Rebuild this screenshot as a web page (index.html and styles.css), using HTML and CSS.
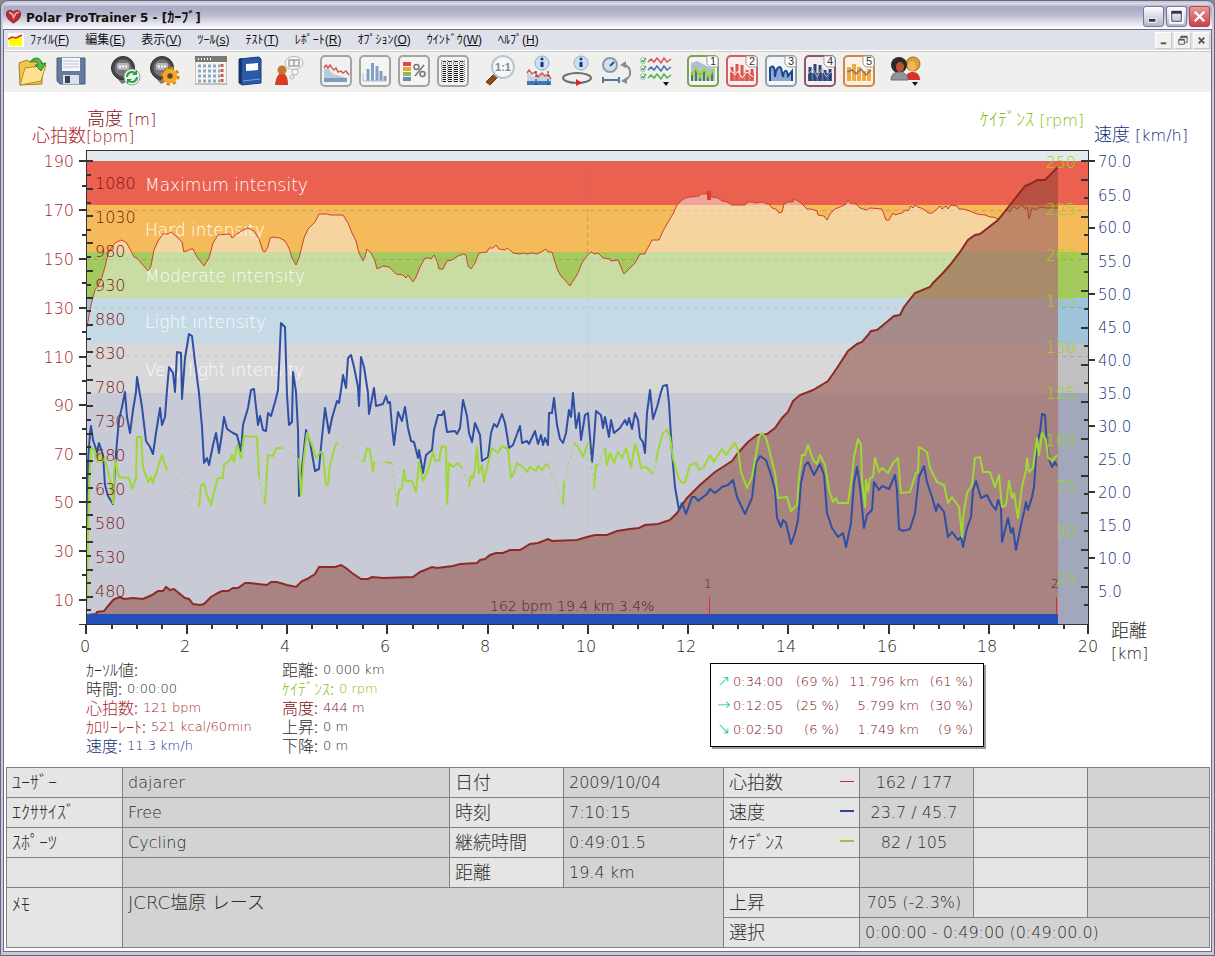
FILE: index.html
```html
<!DOCTYPE html>
<html lang="ja">
<head>
    <meta charset="UTF-8">
    <meta name="viewport" content="width=device-width, initial-scale=1.0">
    <title>Polar ProTrainer 5 - [ｶｰﾌﾞ]</title>
    <link rel="stylesheet" href="styles.css">
</head>
<body>
<div class="window">
    <header class="title-bar">
        <svg class="app-icon" viewBox="0 0 14 14"><path d="M7 13C2 10 0 7 .5 4 1 1 5 .5 7 3 9 .5 13 1 13.500 4 14 7 12 10 7 13Z" fill="#c8252c" stroke="#6d3a40"/><path d="M3 3l3 2 1 3 2-4 3-1" fill="none" stroke="#f6a9a6" stroke-width="1.500"/></svg>
        <h1>Polar ProTrainer 5 - [<span class="kana">ｶｰﾌﾞ</span>]</h1>
        <div class="window-buttons">
            <button class="wb" aria-label="最小化"><svg viewBox="0 0 20 20"><path d="M4 14h9" stroke="#fff" stroke-width="5"/><path d="M5 14h7" stroke="#33334f" stroke-width="3"/></svg></button>
            <button class="wb" aria-label="最大化"><svg viewBox="0 0 20 20"><path d="M4 5h12v11H4z" fill="none" stroke="#fff" stroke-width="3"/><path d="M5 6h10v9H5z" fill="none" stroke="#33334f"/><path d="M4.500 5.500h11" stroke="#33334f" stroke-width="3"/></svg></button>
            <button class="wb wb-close" aria-label="閉じる"><svg viewBox="0 0 20 20"><path d="M5 5l10 10M15 5L5 15" stroke="#fff" stroke-width="2.500"/></svg></button>
        </div>
    </header>
    <div class="client">
        <nav class="menu-bar">
            <svg class="doc-icon" viewBox="0 0 16 14"><path d="M0 0h16v14H0z" fill="#fff"/><path d="M1 6l4-2 3 1 6-2v10H1z" fill="#ff0"/><path d="M0 6l4-2 4 1 6-3" fill="none" stroke="#d22" stroke-width="1.500"/></svg>
            <button>ﾌｧｲﾙ(<u>F</u>)</button>
            <button>編集(<u>E</u>)</button>
            <button>表示(<u>V</u>)</button>
            <button>ﾂｰﾙ(<u>s</u>)</button>
            <button>ﾃｽﾄ(<u>T</u>)</button>
            <button>ﾚﾎﾟｰﾄ(<u>R</u>)</button>
            <button>ｵﾌﾟｼｮﾝ(<u>O</u>)</button>
            <button>ｳｲﾝﾄﾞｳ(<u>W</u>)</button>
            <button>ﾍﾙﾌﾟ(<u>H</u>)</button>
            <div class="mdi-buttons">
                <button aria-label="最小化"><svg viewBox="0 0 16 16"><path d="M5 11h6" stroke="#555" stroke-width="2"/></svg></button>
                <button aria-label="元に戻す"><svg viewBox="0 0 16 16"><path d="M6 6V4h7v6h-2M4 7h6v5H4z" fill="none" stroke="#555"/><path d="M6 4h7M4 7h6" stroke="#555" stroke-width="2"/></svg></button>
                <button aria-label="閉じる"><svg viewBox="0 0 16 16"><path d="M5 5l6 6M11 5l-6 6" stroke="#555" stroke-width="2"/></svg></button>
            </div>
        </nav>

        <div class="toolbar">
            <div class="tool-group first">
                <button aria-label="開く"><svg viewBox="0 0 32 32"><path d="M3 8l8-3 3 2 12 0v22L4 30z" fill="#f0c552" stroke="#a87c1c"/><path d="M9 13l21-3-5 16L4 30z" fill="#fde391" stroke="#b98a28"/><path d="M14 7c4-6 11-5 12 2l4-1-5 8-6-6 3 0c-1-4-4-5-8-3z" fill="#55b944" stroke="#2a7d26"/></svg></button>
                <button aria-label="保存"><svg viewBox="0 0 32 32"><path d="M2 3h28v26H5l-3-3z" fill="#66799f" stroke="#4c5a7c"/><path d="M7 3h18v13H7z" fill="#f4f6fa"/><path d="M8 6h16M8 9h16M8 12h16" stroke="#b9c4d6"/><path d="M8 20h16v9H8z" fill="#dde0e6"/><path d="M10 21h5v7h-5z" fill="#34405c"/></svg></button>
            </div>
            <div class="tool-group">
                <button aria-label="転送"><svg viewBox="0 0 32 32"><path d="M5 20l8 9 8-4-6-8z" fill="#777"/><circle cx="14" cy="13" r="11.500" fill="#4a4649" stroke="#2c2a2c"/><circle cx="14" cy="13" r="8.500" fill="#77737a"/><rect x="8" y="8" width="12" height="7" rx="2" fill="#b4b4bc"/><path d="M10 11.500h8" stroke="#fff" stroke-width="2" stroke-dasharray="2 1"/><circle cx="23" cy="22" r="8" fill="#e8f3e8" stroke="#91a894"/><path d="M18 22a5 5 0 0 1 9-3M28 22a5 5 0 0 1-9 3" fill="none" stroke="#26a24a" stroke-width="2"/><path d="M28 15v5h-5zM18 29v-5h5z" fill="#26a24a"/></svg></button>
                <button aria-label="設定"><svg viewBox="0 0 32 32"><path d="M5 20l8 9 8-4-6-8z" fill="#777"/><circle cx="14" cy="13" r="11.500" fill="#4a4649" stroke="#2c2a2c"/><circle cx="14" cy="13" r="8.500" fill="#77737a"/><rect x="8" y="8" width="12" height="7" rx="2" fill="#b4b4bc"/><path d="M10 11.500h8" stroke="#fff" stroke-width="2" stroke-dasharray="2 1"/><circle cx="22" cy="21" r="8" fill="none" stroke="#d98410" stroke-width="3" stroke-dasharray="3.300 3"/><circle cx="22" cy="21" r="5" fill="#5c4a30" stroke="#f7a823" stroke-width="4.500"/></svg></button>
            </div>
            <div class="tool-group">
                <button aria-label="カレンダー"><svg viewBox="0 0 32 32"><path d="M0 2h32v27H0z" fill="#f5f5f3" stroke="#94908e"/><path d="M0 1h32v6H0z" fill="#7d7775"/><path d="M3 4h13" stroke="#fff" stroke-width="2" stroke-dasharray="1 2"/><path d="M3 11h22M3 16h22M3 21h22M3 26h22" stroke="#8fa8c4" stroke-width="3" stroke-dasharray="3 2"/><path d="M27 9v20" stroke="#d9544d" stroke-width="3" stroke-dasharray="3 2"/></svg></button>
                <button aria-label="日誌"><svg viewBox="0 0 32 32"><path d="M5 4l20-2 2 2v24l-19 2-3-2z" fill="#2b59a8" stroke="#183d7e"/><path d="M5 4l3-1v26l-3-1z" fill="#153671"/><path d="M12 9l12-1v7l-12 1z" fill="#fff"/><path d="M9 26l17-2" stroke="#7ea2d9"/></svg></button>
                <button aria-label="プロフィール"><svg viewBox="0 0 32 32"><path d="M2 30c1-9 4-12 7-12s6 3 6 12z" fill="#d73b22"/><circle cx="9" cy="15" r="4.500" fill="#c97432"/><ellipse cx="21" cy="8" rx="9" ry="6.500" fill="#f7f7f7" stroke="#b5b5b2"/><path d="M16 5h5v6h-5zM21 5h5v6h-5z" fill="none" stroke="#a3a3a0" stroke-width="1.500"/><circle cx="22" cy="17" r="3" fill="#f7f7f7" stroke="#b5b5b2"/><circle cx="19" cy="22" r="2" fill="#f7f7f7" stroke="#b5b5b2"/></svg></button>
            </div>
            <div class="tool-group">
                <button aria-label="カーブ"><svg viewBox="0 0 32 32"><rect x="1" y="1" width="30" height="30" rx="4" fill="#f1f1f1" stroke="#a6a4a2" stroke-width="2"/><path d="M4 14l4-1 5 6 7 2 7 2v4H4z" fill="#bccbdb"/><path d="M4 23h23v4H4z" fill="#7d9bbd"/><path d="M4 13l2-3 2 3 2-3 2 3 2 2 2-2 2 4 3-1 2 2 3-2 3 4" fill="none" stroke="#dc5557" stroke-width="1.500"/></svg></button>
                <button aria-label="分布"><svg viewBox="0 0 32 32"><rect x="1" y="1" width="30" height="30" rx="4" fill="#f4f4f3" stroke="#a6a4a2" stroke-width="2"/><path d="M9 26V14M13.500 26V8M18 26V11M22 26v-10M26 26v-5" stroke="#83a2c3" stroke-width="3"/><path d="M4 18v8h23" fill="none" stroke="#aac0d6"/></svg></button>
                <button aria-label="ゾーン"><svg viewBox="0 0 32 32"><rect x="1" y="1" width="30" height="30" rx="4" fill="#f4f4f3" stroke="#a6a4a2" stroke-width="2"/><path d="M5 9h8" stroke="#d94a3f" stroke-width="4"/><path d="M5 14h8" stroke="#efa13d" stroke-width="4"/><path d="M5 19h8" stroke="#8dbb50" stroke-width="4"/><path d="M5 24h8" stroke="#5f91bb" stroke-width="4"/><path d="M17 21l9-11" stroke="#777" stroke-width="1.500"/><circle cx="18.500" cy="12" r="2.500" fill="none" stroke="#777" stroke-width="1.500"/><circle cx="24.500" cy="19" r="2.500" fill="none" stroke="#777" stroke-width="1.500"/></svg></button>
                <button aria-label="一覧"><svg viewBox="0 0 32 32"><rect x="1" y="1" width="30" height="30" rx="4" fill="#f4f4f3" stroke="#a6a4a2" stroke-width="2"/><path d="M4 5h24v3H4z" fill="#ddd"/><path d="M5 6.500h24" stroke="#333" stroke-dasharray="4 2"/><path d="M7 10v17M13 10v17M19 10v17M25 10v17" stroke="#111" stroke-width="4" stroke-dasharray="1 1"/><path d="M4.500 5v22M10 5v22M16 5v22M22 5v22M27.500 5v22" stroke="#f4f4f3" stroke-width="2"/><path d="M4 8.500h24M4.500 5v22M10.500 5v22M16.500 5v22M22.500 5v22M27.500 5v22" stroke="#888" stroke-dasharray="1 1"/></svg></button>
            </div>
            <div class="tool-group">
                <button aria-label="等倍"><svg viewBox="0 0 32 32"><path d="M2 27l8-8 4 3-8 8z" fill="#8a4e1a" stroke="#633610"/><circle cx="19" cy="12" r="11" fill="#f3f6fa" stroke="#b6c4d3" stroke-width="2"/><text x="19" y="16" class="icon-ratio">1:1</text></svg></button>
                <button aria-label="カーブ情報"><svg viewBox="0 0 32 32"><path d="M4 17l6 5 8-4 10 6v6H4z" fill="#c4d4e5"/><path d="M4 26h24v4H4z" fill="#3d78bd"/><path d="M4 18l2-3 3 4 3-2 3 5 4-4 3 3 3-2 3 5" fill="none" stroke="#dc5557" stroke-width="1.500"/><path d="M13 16v14M25 16v14" stroke="#222" stroke-dasharray="2 2"/><path d="M15 12l5 4 3-4" fill="#a4c1e0"/><circle cx="19" cy="8" r="7" fill="#cfe0f1" stroke="#93adc9"/><path d="M19 7v5" stroke="#13377a" stroke-width="3"/><circle cx="19" cy="4" r="1.500" fill="#13377a"/></svg></button>
                <button aria-label="ラップ情報"><svg viewBox="0 0 32 32"><ellipse cx="15" cy="23" rx="14" ry="5" fill="none" stroke="#6d6d6a" stroke-width="2"/><path d="M14 24l6 4-6 3z" fill="#d22"/><path d="M15 12l5 4 3-4" fill="#a4c1e0"/><circle cx="19" cy="8" r="7" fill="#cfe0f1" stroke="#93adc9"/><path d="M19 7v5" stroke="#13377a" stroke-width="3"/><circle cx="19" cy="4" r="1.500" fill="#13377a"/></svg></button>
                <button aria-label="時間と距離"><svg viewBox="0 0 32 32"><circle cx="9" cy="10" r="7" fill="#cfe2f2" stroke="#8e9ba6" stroke-width="2"/><path d="M9 11l4-4" stroke="#2b4e78" stroke-width="2"/><path d="M2 25h16M2 22v6M18 22v6" stroke="#55779f" stroke-width="2"/><path d="M23 10c8 2 8 12 1 15" fill="none" stroke="#8c8c89" stroke-width="2"/><path d="M19 10l6-4v7zM20 26l6-4v7z" fill="#8c8c89"/></svg></button>
                <button aria-label="表示する曲線"><svg viewBox="0 0 32 32"><path d="M1 3h4v5H1zM1 11h4v5H1zM1 19h4v5H1z" fill="#fff" stroke="#8fbf94"/><path d="M2 5l1 2 3-4M2 13l1 2 3-4M2 21l1 2 3-4" fill="none" stroke="#1e8434"/><path d="M8 7l3-3 3 3 3-4 4 5 3-5 3 4 4-3" fill="none" stroke="#dc5557" stroke-width="1.500"/><path d="M8 15l3-3 3 3 3-4 4 5 3-5 3 4 4-3" fill="none" stroke="#4a6db0" stroke-width="1.500"/><path d="M8 23l3-3 3 3 3-4 4 5 3-5 3 4 4-3" fill="none" stroke="#55b050" stroke-width="1.500"/><path d="M23 27h6l-3 4z" fill="#111"/></svg></button>
            </div>
            <div class="tool-group">
                <button aria-label="表示 1"><svg viewBox="0 0 32 32"><rect x="1" y="1" width="30" height="30" rx="4" fill="#f4f5f0" stroke="#78a551" stroke-width="2"/><path d="M4 8l6-2 10 5 8 4v11H4z" fill="#b3bfd0"/><path d="M5 26V17M9 26V14M13 26V18M17 26V14M21 26V20M25 26V16" stroke="#4c7f48" stroke-width="2"/><path d="M4 20l5-7 4 9 4-8 5 8 5-9" fill="none" stroke="#9bd63b" stroke-width="2"/><path d="M20 1h9l2 2v9h-8l-3-3z" fill="#fff" stroke="#999"/><text x="26" y="10" class="icon-num">1</text></svg></button>
                <button aria-label="表示 2"><svg viewBox="0 0 32 32"><rect x="1" y="1" width="30" height="30" rx="4" fill="#f8eeee" stroke="#cf5f62" stroke-width="2"/><path d="M4 18h24v8H4z" fill="#e87a70"/><path d="M6 26V12M11 26V9M16 26V10M21 26V15M26 26V14" stroke="#d85750" stroke-width="3"/><path d="M4 15l5 5 3-4 4 7 5-6 6 5" fill="none" stroke="#fff"/><path d="M20 1h9l2 2v9h-8l-3-3z" fill="#fff" stroke="#999"/><text x="26" y="10" class="icon-num">2</text></svg></button>
                <button aria-label="表示 3"><svg viewBox="0 0 32 32"><rect x="1" y="1" width="30" height="30" rx="4" fill="#f3f5f8" stroke="#8f9fb5" stroke-width="2"/><path d="M4 19h24v7H4z" fill="#2e5ba2"/><path d="M5 26V13c4-4 5 1 5 9 1-9 4-12 6-9l2 9c1-8 4-8 5-1l4-5v10" fill="#8ea8cf" stroke="#1c458e" stroke-width="2"/><path d="M20 1h9l2 2v9h-8l-3-3z" fill="#fff" stroke="#999"/><text x="26" y="10" class="icon-num">3</text></svg></button>
                <button aria-label="表示 4"><svg viewBox="0 0 32 32"><rect x="1" y="1" width="30" height="30" rx="4" fill="#f4eef0" stroke="#89596b" stroke-width="2"/><path d="M4 18h24v8H4z" fill="#54719d"/><path d="M6 26V12M11 26V9M16 26V10M21 26V15M26 26V14" stroke="#26477b" stroke-width="3"/><path d="M4 19l5-5 4 8 5-9 4 9 5-5" fill="none" stroke="#cc9ca8"/><path d="M20 1h9l2 2v9h-8l-3-3z" fill="#fff" stroke="#999"/><text x="26" y="10" class="icon-num">4</text></svg></button>
                <button aria-label="表示 5"><svg viewBox="0 0 32 32"><rect x="1" y="1" width="30" height="30" rx="4" fill="#f8f1e8" stroke="#d48444" stroke-width="2"/><path d="M6 26V12M11 26V9M16 26V12M21 26V16M26 26V14" stroke="#f4a83d" stroke-width="4"/><path d="M4 17l5-2 4 4 5-5 5 6 5-5" fill="none" stroke="#777" stroke-width="1.500"/><path d="M20 1h9l2 2v9h-8l-3-3z" fill="#fff" stroke="#999"/><text x="26" y="10" class="icon-num">5</text></svg></button>
            </div>
            <div class="tool-group">
                <button aria-label="ユーザー"><svg viewBox="0 0 32 32"><circle cx="23" cy="9" r="7" fill="#d7a137" stroke="#9a6d17"/><ellipse cx="22" cy="11" rx="4" ry="5" fill="#f2b45c"/><path d="M15 25c0-6 4-8 8-8s7 3 7 8z" fill="#d9312b"/><circle cx="9" cy="10" r="8" fill="#2b292b"/><ellipse cx="10" cy="12" rx="4" ry="5" fill="#c0522a"/><path d="M1 25c0-5 3-8 8-8s9 3 9 8z" fill="#8f949d" stroke="#6a6e76"/><path d="M22 27h6l-3 4z" fill="#111"/></svg></button>
            </div>
        </div>

        <main>
            <svg class="chart" viewBox="4 92 1207 568" role="img" aria-label="カーブ">
                <defs>
                    <clipPath id="recorded"><path d="M86 151h972v473H86z"/></clipPath>
                </defs>
                <g class="zones">
                    <path d="M86 151h1002v10H86z" fill="#e3e8ed"/>
                    <path d="M86 161h1002v44H86z" fill="#eb6150"/>
                    <path d="M86 205h1002v47H86z" fill="#f5ba5a"/>
                    <path d="M86 252h1002v46H86z" fill="#a4c95e"/>
                    <path d="M86 298h1002v46H86z" fill="#9fc4da"/>
                    <path d="M86 344h1002v49H86z" fill="#c0c0c0"/>
                    <path d="M86 393h1002v231H86z" fill="#a3a7bb"/>
                </g>
                <path class="grid" d="M86 161.500h1002M86 210.500h1002M86 259.500h1002M86 307.500h1002M86 356.500h1002M587.500 161v463"/>

                <g class="zone-names">
                    <text x="145" y="191">Maximum intensity</text>
                    <text x="145" y="236">Hard intensity</text>
                    <text x="145" y="282">Moderate intensity</text>
                    <text x="145" y="328">Light intensity</text>
                    <text x="145" y="376">Very light intensity</text>
                </g>

                <!-- heart rate and altitude, filled down to the axis -->
                <g clip-path="url(#recorded)">
                    <path class="hr" d="M80 640V327H87L90 310 93 297 95 290 98 286 102 277 105 267 108 254 112 247 115 243 121 240 126 242 130 249 134 257 137 258 142 264 148 271 151 266 154 250 158 241 163 234 168 234 171 232 177 237 182 242 184 252 191 249 193 249 197 257 204 266 209 258 213 243 218 235 230 234 232 238 237 234 243 230 248 228 254 231 259 239 263 251 265 252 268 247 270 238 273 237 280 238 285 241 289 248 292 258 296 265 299 258 304 238 308 229 315 222 319 214 327 214 330 215 343 215 348 223 352 233 356 241 359 253 363 261 365 257 367 249 371 253 375 261 377 269 383 266 389 267 396 274 403 275 406 278 408 275 413 282 416 277 420 267 425 258 429 258 431 259 434 255 437 261 439 269 443 269 447 261 452 260 458 256 463 254 466 255 468 266 471 269 475 263 479 253 487 252 489 248 493 248 496 245 499 249 505 250 507 248 511 251 513 253 520 254 523 253 527 254 533 253 537 254 541 252 546 249 548 252 552 252 555 262 558 271 561 276 565 280 570 286 573 281 577 275 582 263 586 257 591 252 595 254 598 253 603 258 610 259 611 261 618 260 621 267 624 274 630 268 635 263 640 254 645 254 647 249 649 246 652 240 659 240 663 231 668 222 673 214 677 205 681 201 685 198 690 197 699 196 701 194 708 194 712 197 718 198 722 201 727 202 732 205 745 205 748 202 753 202 755 203 763 202 767 204 769 204 772 208 776 209 779 213 782 212 784 204 788 202 793 202 794 199 798 201 802 204 807 209 811 209 817 211 818 215 824 216 827 220 830 214 835 209 840 207 846 204 848 200 850 203 856 204 860 208 867 210 870 208 882 209 886 220 889 220 893 213 895 215 898 214 902 213 906 210 908 211 911 206 913 208 915 205 918 207 921 208 923 209 926 211 928 213 932 213 937 209 940 206 942 209 946 206 948 209 951 205 957 206 959 209 963 209 970 211 977 214 985 215 990 217 993 217 998 219 1002 215 1007 210 1010 212 1013 206 1017 209 1022 205 1025 209 1027 207 1029 219 1032 208 1036 210 1040 207 1045 208H1070V640Z"/>
                    <path d="M707 191h4v9h-4z" fill="#dc3a34"/>
                    <path class="altitude" d="M80 640V615H87L96 614 97 612 104 611 108 606 114 599 120 597 124 599 133 598 143 599 152 595 158 591 163 591 166 587 170 590 174 589 180 594 185 598 189 599 193 604 200 605 204 604 211 597 218 593 222 591 228 591 233 588 238 588 245 583 250 583 258 584 267 585 271 582 277 582 287 585 296 587 302 581 307 579 315 574 319 567 335 567 341 565 346 568 352 573 361 579 368 579 372 577 383 578 413 577 420 572 432 567 437 568 453 566 460 564 477 563 480 560 485 559 490 555 496 553 503 553 510 550 520 550 530 544 538 543 548 539 552 541 577 540 587 537 595 535 607 535 617 531 630 529 639 528 645 525 658 524 670 520 677 513 682 505 687 498 700 485 715 472 732 461 738 453 748 442 757 435 767 434 775 428 782 418 788 412 793 401 800 395 813 390 828 381 837 368 848 351 857 344 862 342 868 335 871 331 877 330 888 321 894 316 900 315 904 307 915 293 930 287 933 283 943 273 950 265 960 252 968 240 975 235 980 234 998 220 1010 205 1025 186 1032 183 1037 180 1045 180 1052 173 1058 167H1070V640Z"/>
                </g>
                <path d="M86 614h972v10H86z" fill="#2350b8"/>

                <!-- speed -->
                <polyline class="speed-line" points="87,603 87,500 88,462 90,433 91,426 93,440 97,452 99,443 103,455 105,485 108,496 113,504 116,453 119,420 122,407 125,392 127,417 130,433 133,410 136,392 137,377 142,407 146,441 150,447 153,454 156,433 160,408 162,425 165,417 167,390 169,367 173,373 175,392 177,352 181,353 182,399 185,358 189,334 192,336 195,362 199,393 202,427 204,463 207,458 209,465 213,445 216,433 219,453 222,433 224,417 227,429 233,433 237,435 241,451 243,425 248,408 251,390 254,389 258,425 260,416 263,430 266,431 268,413 271,416 275,402 278,390 281,323 285,327 287,395 289,425 292,422 293,372 296,392 298,430 299,496 302,468 306,430 310,442 315,471 319,469 321,447 325,408 329,433 332,418 337,401 339,403 341,390 343,375 346,388 348,358 351,355 354,367 358,387 359,406 361,357 364,367 368,393 369,414 374,388 376,406 383,404 386,396 388,403 390,402 392,427 394,445 398,412 402,421 405,407 408,428 411,441 414,442 418,458 419,450 423,473 426,455 432,450 434,430 438,415 442,415 444,411 447,432 455,431 457,434 460,428 463,400 467,416 469,433 472,442 475,423 480,435 482,461 488,457 491,433 494,424 497,427 502,414 505,423 507,435 509,448 513,445 520,426 522,443 527,441 529,444 535,431 538,444 541,435 543,445 545,438 548,445 549,413 552,413 554,398 557,425 560,439 563,443 566,433 569,410 571,417 573,393 576,428 579,413 581,440 585,415 588,413 592,462 594,440 596,411 601,415 603,428 605,417 609,437 611,420 614,433 620,428 625,420 627,425 629,418 632,429 635,413 638,420 640,438 643,442 645,453 647,413 650,390 653,419 657,407 661,392 663,386 667,385 669,403 672,453 675,487 679,510 682,503 686,514 692,497 695,497 698,501 707,494 710,489 715,493 722,487 728,485 733,480 737,497 745,514 752,498 756,463 760,456 766,460 771,475 775,490 777,518 781,527 783,520 786,523 791,544 795,533 798,520 801,483 805,465 808,462 814,475 820,464 824,475 827,513 832,528 838,537 843,533 846,547 851,523 854,483 857,467 860,487 864,528 867,515 872,510 874,482 879,490 882,486 889,489 895,475 897,490 899,529 903,531 910,529 915,513 919,477 924,466 927,482 932,497 936,511 938,504 944,512 948,537 952,532 958,540 961,537 963,547 967,528 971,517 973,490 976,481 981,498 987,495 992,505 996,510 998,500 1001,507 1002,542 1008,518 1011,533 1013,528 1016,550 1021,525 1024,512 1026,502 1028,510 1032,497 1034,487 1037,443 1040,432 1042,414 1045,415 1047,447 1050,462 1052,467 1055,462 1057,466"/>

                <!-- cadence, dotted where the sensor dropped out -->
                <path class="cadence-line" d="M87 603L88 530 89 490 91 447 94 450 97 462 99 452 102 462 104 457 107 467 110 480 113 503 115 460 119 477 129 478 132 489 136 478 137 437 141 437 143 467 148 482 151 477 153 483 157 470 162 455 167 470M199 507L201 485 204 484 207 495 211 505 214 492 218 478 223 478 224 465 230 460 232 455 234 462 237 445 241 458 244 436 257 437 259 477M264 503L265 503 268 455 273 456 276 448 282 448M299 459L301 495 304 457 307 433 312 445 316 458 320 452 323 453 326 485 328 485 330 465 334 450 337 442M362 461L364 461 367 448 370 450 373 472 374 462M385 462L392 463M397 506L399 490 402 488 404 470 406 481 412 481 416 492 419 462 423 481 428 470 433 452 435 461 439 460 442 446 446 447 447 504 449 463 453 467 458 463 462 468M469 487L471 476 473 478 475 468 477 447 479 473 482 465 484 482 488 463 492 448 498 453 502 446 508 449 511 478 513 475 517 463 523 467 527 472 530 467 536 471 538 466 542 470 546 464 549 467M563 505L564 482M574 443L577 445 583 457 587 445 589 443M594 489L596 465 598 465M605 448L607 465 610 453 614 463 618 452 622 458 626 448 631 467 635 444 638 453 641 468 646 467 653 474M656 462L658 450 663 433 667 430 670 437 673 458 678 477 682 483 685 482 690 465 696 463 699 470 704 467 710 455 714 462 722 449 726 455 730 449 735 443 738 450 741 472 747 488 752 477 755 460 759 437 762 433 766 438 770 453 775 473 778 498 787 497 791 511 797 505 799 477 802 455 805 455 808 445 813 460 817 464 820 455 825 465 829 490 833 502 836 498 838 503 848 503 851 483 854 457 858 439 861 445 862 480 865 507 866 480 868 492 870 478 873 477 875 458 879 472 882 468 888 473 893 463 898 458 901 493 910 492 916 473 918 472 919 447 927 452 930 468 937 482 944 485 948 503 952 497 959 507 962 537 963 517 967 493 972 485 975 458 980 457 983 472 990 472 995 487 999 475 1002 507 1006 505 1009 481 1012 498 1014 493 1018 518 1022 487 1026 470 1027 458 1029 472 1033 468 1037 438 1039 455 1042 433 1046 440 1048 457 1052 461 1057 455"/>
                <path class="cadence-gap" d="M167 470L197 498M259 477L264 503M282 448L299 459M337 442L362 461M374 462L385 462M392 463L397 506M462 468L469 487M549 467L563 505M564 482L574 443M589 443L594 489M598 465L605 448M653 474L656 462"/>

                <!-- laps -->
                <path d="M709.500 597v18M1056.500 597v18" stroke="#e02a34"/>
                <g class="lap-text">
                    <text class="small" x="704" y="588">1</text>
                    <text class="small" x="1051" y="588">2</text>
                    <text x="490" y="611">162 bpm 19.4 km 3.4%</text>
                </g>

                <!-- frame and ticks -->
                <path class="frame" d="M86.500 625V150.500H1088.500V624.500H79"/>
                <path class="ticks" d="M79 161h14M79 210h8M79 259h8M79 308h8M79 357h8M79 405h8M79 454h8M79 502h8M79 551h8M79 600h8"/>
                <path class="ticks" d="M82 186h5M82 235h5M82 283h5M82 332h5M82 381h5M82 429h5M82 478h5M82 527h5M82 575h5"/>
                <path class="ticks" d="M86 175h5M86 189h7M86 203h5M86 216h7M86 230h5M86 243h7M86 257h5M86 271h7M86 285h5M86 298h7M86 311h5M86 325h7M86 339h5M86 352h7M86 366h5M86 380h7M86 393h5M86 406h7M86 420h5M86 434h7M86 447h5M86 461h7M86 474h5M86 488h7M86 502h5M86 515h7M86 529h5M86 542h7M86 556h5M86 570h7M86 583h5M86 597h7M86 610h5"/>
                <path class="ticks" d="M1081 161h14M1088 228h7M1088 294h7M1088 360h7M1088 426h7M1088 492h7M1088 558h7"/>
                <path class="ticks" d="M1081 180h7M1084 198h4M1081 217h7M1084 235h4M1081 254h7M1084 272h4M1081 291h7M1084 309h4M1081 328h7M1084 346h4M1081 365h7M1084 383h4M1081 402h7M1084 420h4M1081 439h7M1084 457h4M1081 476h7M1084 494h4M1081 513h7M1084 531h4M1081 550h7M1084 568h4M1081 587h7M1084 605h4"/>
                <path class="ticks" d="M86 624v10M187 624v10M287 624v10M387 624v10M488 624v10M588 624v10M688 624v10M788 624v10M889 624v10M989 624v10M1088 624v10"/>
                <path class="ticks" d="M112 624v5M137 624v5M162 624v5M212 624v5M237 624v5M262 624v5M312 624v5M337 624v5M363 624v5M413 624v5M438 624v5M463 624v5M513 624v5M538 624v5M563 624v5M613 624v5M638 624v5M663 624v5M713 624v5M738 624v5M763 624v5M813 624v5M838 624v5M864 624v5M914 624v5M939 624v5M964 624v5M1014 624v5M1039 624v5M1064 624v5"/>

                <g class="axis-hr">
                    <text x="74" y="167">190</text><text x="74" y="216">170</text><text x="74" y="265">150</text><text x="74" y="314">130</text><text x="74" y="363">110</text>
                    <text x="74" y="411">90</text><text x="74" y="460">70</text><text x="74" y="508">50</text><text x="74" y="557">30</text><text x="74" y="606">10</text>
                </g>
                <g class="axis-alt">
                    <text x="95" y="189">1080</text><text x="95" y="223">1030</text><text x="95" y="257">980</text><text x="95" y="291">930</text><text x="95" y="325">880</text><text x="95" y="359">830</text><text x="95" y="393">780</text>
                    <text x="95" y="427">730</text><text x="95" y="461">680</text><text x="95" y="495">630</text><text x="95" y="529">580</text><text x="95" y="563">530</text><text x="95" y="597">480</text>
                </g>
                <g class="axis-cad">
                    <text x="1076" y="168">250</text><text x="1076" y="215">225</text><text x="1076" y="261">200</text><text x="1076" y="307">175</text><text x="1076" y="353">150</text>
                    <text x="1076" y="399">125</text><text x="1076" y="446">100</text><text x="1076" y="492">75</text><text x="1076" y="537">50</text><text x="1076" y="584">25</text>
                </g>
                <g class="axis-speed">
                    <text x="1098" y="167">70.0</text><text x="1098" y="201">65.0</text><text x="1098" y="233">60.0</text><text x="1098" y="267">55.0</text><text x="1098" y="300">50.0</text><text x="1098" y="333">45.0</text><text x="1098" y="366">40.0</text>
                    <text x="1098" y="399">35.0</text><text x="1098" y="432">30.0</text><text x="1098" y="465">25.0</text><text x="1098" y="498">20.0</text><text x="1098" y="531">15.0</text><text x="1098" y="564">10.0</text><text x="1098" y="597">5.0</text>
                </g>
                <g class="axis-km">
                    <text x="85" y="652">0</text><text x="185" y="652">2</text><text x="285" y="652">4</text><text x="385" y="652">6</text><text x="485" y="652">8</text><text x="586" y="652">10</text>
                    <text x="686" y="652">12</text><text x="786" y="652">14</text><text x="887" y="652">16</text><text x="987" y="652">18</text><text x="1088" y="652">20</text>
                </g>

                <text class="c-alt" x="87" y="125"><tspan class="ja">高度</tspan> [m]</text>
                <text class="c-hr" x="32" y="142"><tspan class="ja">心拍数</tspan>[bpm]</text>
                <text class="c-cad end" x="1084" y="126"><tspan class="ja">ｹｲﾃﾞﾝｽ</tspan> [rpm]</text>
                <text class="c-speed" x="1094" y="141"><tspan class="ja">速度</tspan> [km/h]</text>
                <text class="c-dark" x="1111" y="637"><tspan class="ja">距離</tspan></text>
                <text class="c-dark" x="1111" y="659">[km]</text>
            </svg>

            <section class="readout">
                <dl class="cursor-values">
                    <div><dt>ｶｰｿﾙ値:</dt></div>
                    <div><dt>時間:</dt><dd>0:00:00</dd></div>
                    <div class="c-hr"><dt>心拍数:</dt><dd>121 bpm</dd></div>
                    <div class="c-hr"><dt>ｶﾛﾘｰﾚｰﾄ:</dt><dd>521 kcal/60min</dd></div>
                    <div class="c-speed"><dt>速度:</dt><dd>11.3 km/h</dd></div>
                </dl>
                <dl class="cursor-values">
                    <div><dt>距離:</dt><dd>0.000 km</dd></div>
                    <div class="c-cad"><dt>ｹｲﾃﾞﾝｽ:</dt><dd>0 rpm</dd></div>
                    <div class="c-alt"><dt>高度:</dt><dd>444 m</dd></div>
                    <div><dt>上昇:</dt><dd>0 m</dd></div>
                    <div><dt>下降:</dt><dd>0 m</dd></div>
                </dl>
                <table class="slopes">
                    <tr><th>↗</th><td class="time">0:34:00</td><td>(69 %)</td><td class="dist">11.796 km</td><td>(61 %)</td></tr>
                    <tr><th>→</th><td class="time">0:12:05</td><td>(25 %)</td><td class="dist">5.799 km</td><td>(30 %)</td></tr>
                    <tr><th>↘</th><td class="time">0:02:50</td><td>(6 %)</td><td class="dist">1.749 km</td><td>(9 %)</td></tr>
                </table>
            </section>

            <table class="summary">
                <colgroup><col class="w-name"><col><col class="w-value"><col class="w-date"><col class="w-series"><col class="w-value"><col class="w-value"><col class="w-last"></colgroup>
                <tr><th>ﾕｰｻﾞｰ</th><td>dajarer</td><th>日付</th><td>2009/10/04</td><th><span class="series">心拍数<i class="key key-hr"></i></span></th><td class="mid">162 / 177</td><th></th><td></td></tr>
                <tr><th>ｴｸｻｻｲｽﾞ</th><td>Free</td><th>時刻</th><td>7:10:15</td><th><span class="series">速度<i class="key key-speed"></i></span></th><td class="mid">23.7 / 45.7</td><th></th><td></td></tr>
                <tr><th>ｽﾎﾟｰﾂ</th><td>Cycling</td><th>継続時間</th><td>0:49:01.5</td><th><span class="series">ｹｲﾃﾞﾝｽ<i class="key key-cad"></i></span></th><td class="mid">82 / 105</td><th></th><td></td></tr>
                <tr><th></th><td></td><th>距離</th><td>19.4 km</td><th></th><td></td><th></th><td></td></tr>
                <tr><th rowspan="2" class="memo">ﾒﾓ</th><td rowspan="2" colspan="3" class="memo">JCRC塩原 レース</td><th>上昇</th><td class="mid">705 (-2.3%)</td><th></th><td></td></tr>
                <tr><th>選択</th><td colspan="3">0:00:00 - 0:49:00 (0:49:00.0)</td></tr>
            </table>
        </main>
    </div>
</div>
</body>
</html>
```
FILE: styles.css
```css
* { box-sizing: border-box; }
body { margin: 0; background: #8a8998; color: #2c2c2c; font-family: "DejaVu Sans", "Noto Sans CJK JP", sans-serif; font-weight: 200; font-size: 16px; }
button { font: inherit; color: inherit; background: none; border: 0; padding: 0; margin: 0; }

.window { min-height: 100vh; display: flex; flex-direction: column; padding: 2px 2px 3px; background: #c9c9db; border: 1px solid #67657c; border-radius: 8px 8px 0 0; }
.client { flex: 1; display: flex; flex-direction: column; background: #fff; border: 1px solid #6c6c88; }

.title-bar { height: 26px; display: flex; align-items: center; gap: 5px; padding: 0 2px 0 3px; border-radius: 6px 6px 0 0; background: linear-gradient(#e6e6ef, #a9a9c4 15%, #b9b9cf 45%, #fff); }
.title-bar h1 { margin: 0; font-size: 12px; font-weight: 700; color: #111; }
.title-bar .kana { font-size: 14px; }
.app-icon { width: 15px; height: 15px; }
.window-buttons { margin-left: auto; display: flex; gap: 2px; }
.wb { width: 21px; height: 21px; border: 1px solid #77779a; border-radius: 3px; background: linear-gradient(#fff, #b5b5cc); }
.wb svg { display: block; width: 19px; height: 19px; }
.wb-close { background: linear-gradient(#e99a9a, #c8404a); border-color: #b04550; }

.menu-bar { height: 21px; display: flex; align-items: center; gap: 16px; padding-left: 4px; background: #dfe1ea; color: #111; font-family: "Liberation Sans", "Noto Sans CJK JP", sans-serif; font-weight: 400; font-size: 12px; line-height: 20px; border-bottom: 1px solid #fff; }
.menu-bar .doc-icon { width: 16px; height: 14px; margin-right: -10px; }
.menu-bar button { white-space: nowrap; }
.mdi-buttons { margin-left: auto; display: flex; gap: 2px; padding-right: 1px; }
.mdi-buttons button { width: 17px; height: 17px; background: #f1f1ef; border: 1px solid #fff; border-right-color: #c9c9c9; border-bottom-color: #c9c9c9; }
.mdi-buttons svg { display: block; width: 15px; height: 15px; }

.toolbar { height: 41px; display: flex; gap: 8px; padding-left: 8px; background: #efefed; border-top: 1px solid #ccc; }
.tool-group { display: flex; }
.tool-group.first { margin-right: 7px; }
.tool-group button { width: 39px; height: 38px; display: flex; align-items: center; justify-content: center; }
.tool-group svg { width: 32px; height: 32px; }
.icon-num { font: 400 11px "Liberation Sans", sans-serif; fill: #333; text-anchor: middle; }
.icon-ratio { font: 700 11px "Liberation Sans", sans-serif; fill: #888; text-anchor: middle; }

.chart { display: block; width: 100%; height: auto; overflow: visible; }
.chart .ja { font-family: "Noto Sans CJK JP", sans-serif; font-size: 18px; }
.chart .end { text-anchor: end; }
.zones, .frame, .ticks { shape-rendering: crispEdges; }
.grid { fill: none; stroke: #777; stroke-opacity: 0.4; stroke-dasharray: 4 4; }
.zone-names text { fill: #fff; font-size: 17px; }
.hr { fill: #f4f4f4; fill-opacity: 0.46; stroke: #d04028; stroke-width: 1; }
.altitude { fill: #8a4136; fill-opacity: 0.52; stroke: #8f2a26; stroke-width: 2; }
.speed-line { fill: none; stroke: #2f4fa5; stroke-width: 2; stroke-linejoin: round; }
.cadence-line { fill: none; stroke: #9ed834; stroke-width: 2; stroke-linejoin: round; }
.cadence-gap { fill: none; stroke: #a5d850; stroke-dasharray: 3 3; }
.frame { fill: none; stroke: #333; }
.ticks { fill: none; stroke: #333; stroke-width: 2; }
.lap-text { fill: #3d2424; font-size: 14px; }
.lap-text .small { font-size: 12px; }
.axis-hr { fill: #a81e2a; text-anchor: end; }
.axis-alt { fill: #801414; }
.axis-cad { fill: #93d816; text-anchor: end; }
.axis-speed { fill: #14307c; font-size: 15px; }
.axis-km { fill: #222; text-anchor: middle; }

.c-hr { color: #a81e2a; fill: #a81e2a; }
.c-speed { color: #14307c; fill: #14307c; }
.c-cad { color: #84c010; fill: #84c010; }
.c-alt { color: #7d1014; fill: #7d1014; }
.c-dark { fill: #222; }

.readout { display: grid; grid-template-columns: 196px 1fr 274px; align-items: start; padding: 0 227px 12px 82px; }
.cursor-values { margin: 0; font-size: 13px; line-height: 19px; white-space: nowrap; }
.cursor-values div { display: flex; gap: 5px; height: 19px; align-items: center; }
.cursor-values dt { font-family: "Noto Sans CJK JP", sans-serif; font-size: 16px; }
.cursor-values dd { margin: 0; }
.slopes { margin-top: 3px; padding: 5px 10px 5px 6px; border: 1px solid #000; background: #fff; box-shadow: 2px 2px 0 #999; border-spacing: 0; color: #7d1014; font-size: 13px; }
.slopes th, .slopes td { height: 24px; padding: 0; text-align: right; white-space: nowrap; }
.slopes th { width: 16px; text-align: left; font-size: 16px; font-weight: 200; line-height: 20px; color: #00d080; }
.slopes .time { text-align: left; }
.slopes .dist { padding-right: 5px; }

.summary { width: calc(100% - 3px); margin: 0 1px 3px 2px; table-layout: fixed; border-collapse: collapse; }
.summary th, .summary td { height: 30px; padding: 0 5px; border: 1px solid #808080; text-align: left; line-height: 24px; white-space: nowrap; }
.summary th { padding-bottom: 3px; background: #e5e5e5; font-family: "Noto Sans CJK JP", sans-serif; font-size: 18px; font-weight: 200; }
.summary td { background: #d3d3d3; }
.summary .mid { text-align: center; padding-right: 10px; }
.summary .memo { vertical-align: top; padding-top: 3px; font-size: 18px; }
.w-name { width: 116px; }
.w-value { width: 114px; }
.w-date { width: 160px; }
.w-series { width: 136px; }
.w-last { width: 122px; }
.series { display: flex; align-items: center; justify-content: space-between; }
.key { width: 14px; height: 2px; }
.key-hr { height: 1px; background: #e02020; }
.key-speed { background: #2b4893; }
.key-cad { background: #96c83c; }
```
